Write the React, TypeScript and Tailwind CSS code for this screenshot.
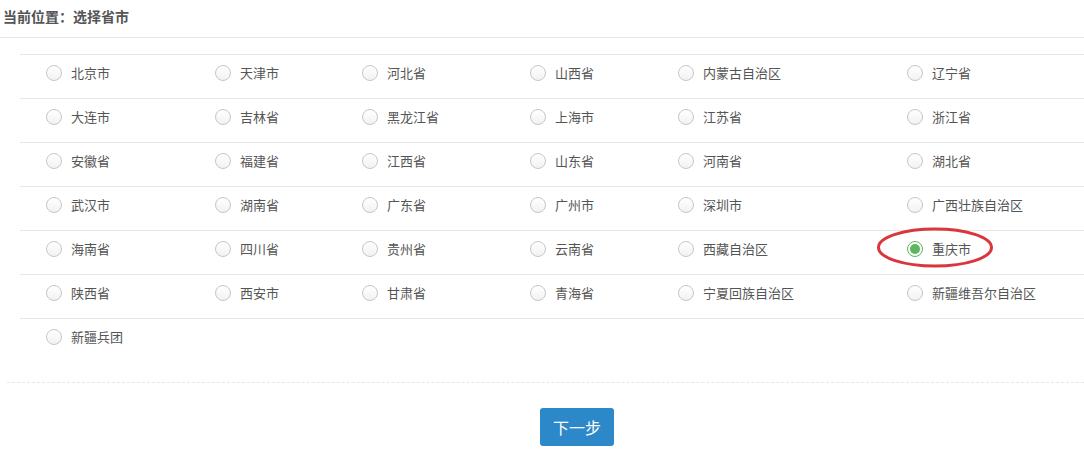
import React from 'react'

const rows: string[][] = [
	['北京市', '天津市', '河北省', '山西省', '内蒙古自治区', '辽宁省'],
	['大连市', '吉林省', '黑龙江省', '上海市', '江苏省', '浙江省'],
	['安徽省', '福建省', '江西省', '山东省', '河南省', '湖北省'],
	['武汉市', '湖南省', '广东省', '广州市', '深圳市', '广西壮族自治区'],
	['海南省', '四川省', '贵州省', '云南省', '西藏自治区', '重庆市'],
	['陕西省', '西安市', '甘肃省', '青海省', '宁夏回族自治区', '新疆维吾尔自治区'],
	['新疆兵团']
]

const selected = '重庆市'

function Radio({ checked }: { checked: boolean }) {
	if (checked) {
		return (
			<span className="flex h-[16px] w-[16px] items-center justify-center rounded-full border border-[#5cb85c] bg-white">
				<span className="h-[10px] w-[10px] rounded-full bg-[#5cb85c]" />
			</span>
		)
	}
	return (
		<span className="h-[16px] w-[16px] rounded-full border border-[#c6c6c6] bg-gradient-to-b from-white to-[#f2f2f2]" />
	)
}

export default function App() {
	return (
		<div
			className="relative h-[460px] w-[1084px] overflow-hidden bg-white text-[#555]"
			style={{ fontFamily: '"Noto Sans CJK SC", "Noto Sans", sans-serif' }}
		>
			<div className="h-[38px] border-b border-[#e8e8e8] pl-[3px] text-[14px] font-semibold leading-[32px] text-[#555]">
				当前位置：选择省市
			</div>

			<div className="mt-[16px] ml-[20px]">
				{rows.map((row, i) => (
					<div
						key={i}
						className="grid h-[44px] grid-cols-[169px_147px_168px_148px_229px_1fr] border-t border-[#e6e6e6]"
					>
						{row.map((name) => (
							<label key={name} className="flex h-[35px] items-center gap-[9px] pl-[26px] text-[13px]">
								<Radio checked={name === selected} />
								<span>{name}</span>
							</label>
						))}
					</div>
				))}
			</div>

			<div className="mt-[20px] ml-[7px] border-t border-dashed border-[#e6e6e6]" />

			<div className="mt-[25px] ml-[540px]">
				<button className="h-[38px] w-[74px] rounded-[3px] bg-[#2d88c9] text-[16px] text-white">
					下一步
				</button>
			</div>

			<svg
				className="pointer-events-none absolute left-[876px] top-[227px]"
				width="118"
				height="41"
				viewBox="0 0 118 41"
			>
				<ellipse cx="59" cy="20.5" rx="56.5" ry="18.5" fill="none" stroke="#d9363e" strokeWidth="3" />
			</svg>
		</div>
	)
}
